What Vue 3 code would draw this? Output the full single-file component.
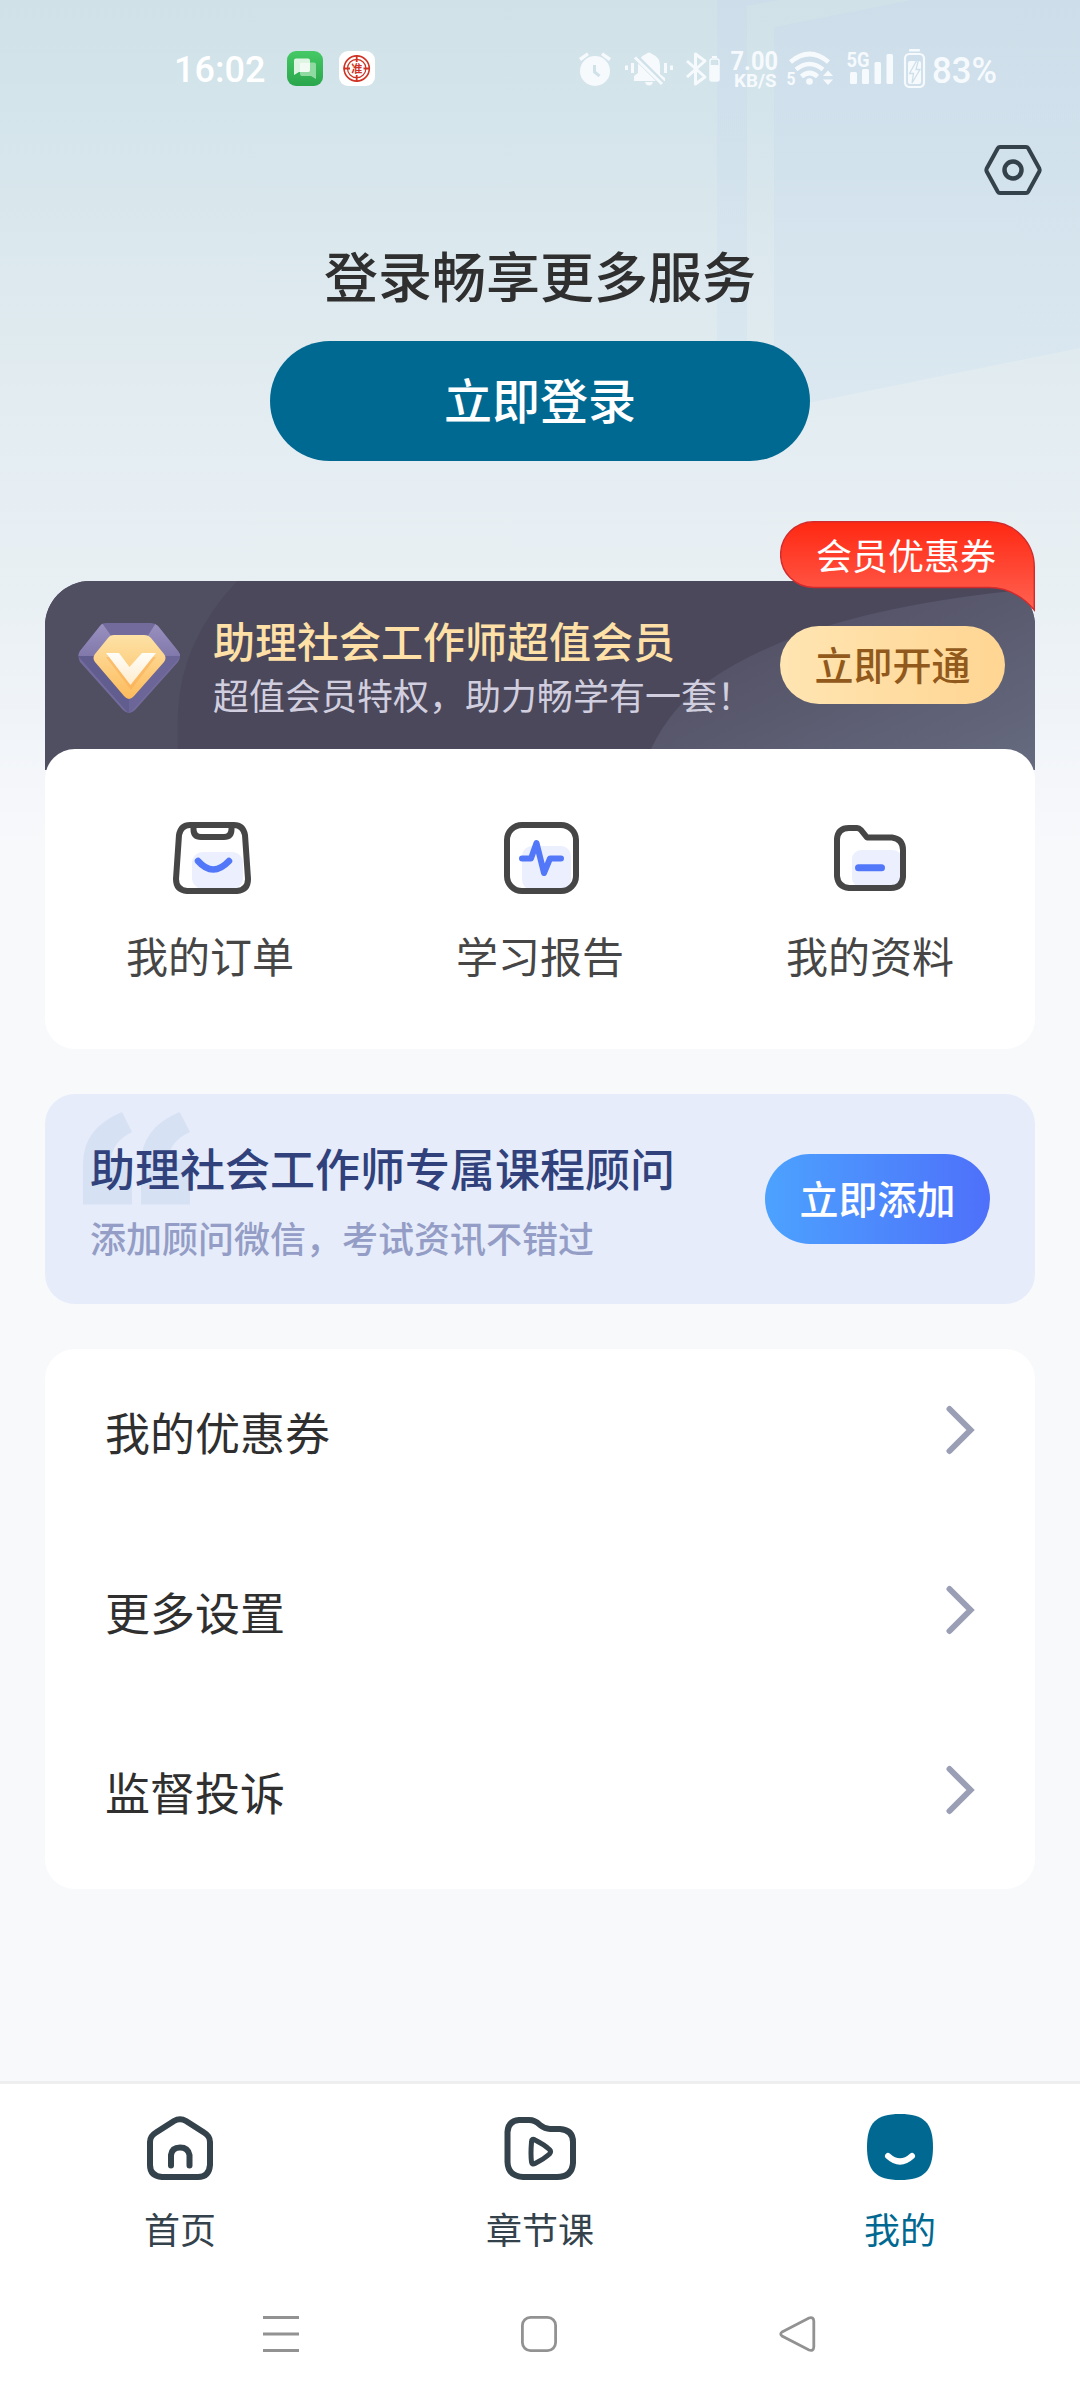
<script setup>
const settings = ['我的优惠券', '更多设置', '监督投诉']
</script>

<template>
  <div class="page">
    <svg class="backdrop" width="1080" height="440" viewBox="0 0 1080 440">
      <defs>
        <linearGradient id="glass" x1="0" y1="0" x2="0" y2="1">
          <stop offset="0" stop-color="#cbdbeb" stop-opacity=".6" />
          <stop offset="1" stop-color="#d3e4f0" stop-opacity=".45" />
        </linearGradient>
      </defs>
      <path d="M717 0H780L747 6V416L717 422Z" fill="url(#glass)" />
      <path d="M774 27L910 0H1080V348L774 410Z" fill="url(#glass)" />
    </svg>

    <header class="status">
      <span class="clock">16:02</span>
      <svg class="chat" width="36" height="35" viewBox="0 0 36 35">
        <defs>
          <linearGradient id="green" x1="0" y1="0" x2="0" y2="1">
            <stop offset="0" stop-color="#45c965" /><stop offset="1" stop-color="#2aa64c" />
          </linearGradient>
        </defs>
        <rect width="36" height="35" rx="9" fill="url(#green)" />
        <path d="M15 11.500H27Q29 11.500 29 13.500V28L24 25H15Q13 25 13 23V13.500Q13 11.500 15 11.500Z" fill="#8edaa0" />
        <path d="M9 7.500H21Q23 7.500 23 9.500V19Q23 21 21 21H12L7 24V9.500Q7 7.500 9 7.500Z" fill="#e9f8ec" fill-opacity=".94" />
        <path d="M13 12H23V19Q23 21 21 21H13Z" fill="#fff" fill-opacity=".5" />
      </svg>
      <svg class="seal" width="36" height="35" viewBox="0 0 36 35">
        <rect width="36" height="35" rx="9" fill="#fff" />
        <g fill="none" stroke="#cf3324">
          <circle cx="17.700" cy="17.500" r="12.600" stroke-width="1.600" />
          <circle cx="17.700" cy="17.500" r="9.200" stroke-width="1.200" />
          <path d="M17.700 4V11M17.700 24V31M4.500 17.500H11M24.500 17.500H31" stroke-width="1.800" />
        </g>
        <text x="17.700" y="21.600" text-anchor="middle" font-size="11" font-weight="700" fill="#cf3324">准</text>
      </svg>
      <svg class="signals" width="440" height="50" viewBox="570 42 440 50" fill="#f6fafd">
        <!-- alarm -->
        <path d="M579 58L587 52.500L589 55L581 61ZM611 58L603 52.500L601 55L609 61Z" />
        <circle cx="595" cy="71" r="15" />
        <path d="M594.500 65V72L599.500 76" fill="none" stroke="#d0e1ea" stroke-width="3" />
        <!-- muted bell -->
        <path d="M634 81V76L638 73V66Q638 57 646 54Q649 51 652 54Q660 57 660 66V74L665 78V81Z" />
        <path d="M645 82H653Q652 85.500 649 85.500T645 82Z" />
        <path d="M637 58L662 83" stroke="#d0e1ea" stroke-width="6" />
        <path d="M635 57.500L662 84" stroke="#f6fafd" stroke-width="3" />
        <path d="M626.500 65.500V70M632.500 63V73M665.500 63V73M671.500 65.500V70" stroke="#f6fafd" stroke-width="3" />
        <!-- bluetooth -->
        <path d="M687 61L705 77L695.500 84V54L705 61L687 77" fill="none" stroke="#f6fafd" stroke-width="3" stroke-linejoin="round" />
        <path d="M712 56H717V58H712Z" />
        <rect x="710" y="59" width="9" height="22" rx="2" fill="none" stroke="#f6fafd" stroke-width="1.500" />
        <rect x="710" y="65" width="9" height="16" rx="1" />
        <!-- network speed -->
        <text x="730.500" y="69.500" font-size="25" font-weight="700" textLength="47.500" lengthAdjust="spacingAndGlyphs">7.00</text>
        <text x="734" y="87" font-size="18" font-weight="700" textLength="42.500" lengthAdjust="spacingAndGlyphs">KB/S</text>
        <!-- wifi -->
        <g fill="none" stroke="#f6fafd" stroke-width="4.600">
          <path d="M790.500 62Q809.500 46 828.500 62" />
          <path d="M796 69.500Q809.500 58.500 823 69.500" />
          <path d="M801.500 76.500Q809.500 69.500 817.500 76.500" />
        </g>
        <circle cx="809.500" cy="81.500" r="3.300" />
        <text x="786.500" y="85" font-size="18" font-weight="700" textLength="9" lengthAdjust="spacingAndGlyphs">5</text>
        <path d="M823 76L828 70.500L833 76ZM823 79.500H833L828 85Z" />
        <!-- cellular -->
        <text x="846.500" y="66.500" font-size="20" font-weight="700" textLength="23" lengthAdjust="spacingAndGlyphs">5G</text>
        <rect x="850" y="72" width="7" height="12" rx="1.500" />
        <rect x="862" y="69" width="7" height="15" rx="1.500" />
        <rect x="874.500" y="62" width="6.500" height="22" rx="1.500" />
        <rect x="886.500" y="54" width="6.500" height="30" rx="1.500" />
        <!-- battery -->
        <rect x="909" y="49" width="11" height="2.600" rx="1" />
        <rect x="905" y="54" width="19" height="33" rx="4.500" fill="none" stroke="#f6fafd" stroke-width="2.200" />
        <rect x="908" y="61" width="13" height="23" rx="2" />
        <path d="M917 60L909.500 73.500H913.500L912 83L920 69.500H916L918.500 60Z" fill="#f6fafd" stroke="#cddfeb" stroke-width="1.300" />
        <text x="932" y="83" font-size="36" font-weight="500" textLength="65" lengthAdjust="spacingAndGlyphs">83%</text>
      </svg>
    </header>

    <div class="toolbar">
      <svg width="58" height="50" viewBox="0 0 58 50" fill="none" stroke="#34424c" stroke-width="4">
        <path d="M16 2H42Q43.500 2 44.200 3.200L55.300 23.500Q56 25 55.300 26.500L44.200 46.800Q43.500 48 42 48H16Q14.500 48 13.800 46.800L2.700 26.500Q2 25 2.700 23.500L13.800 3.200Q14.500 2 16 2Z" />
        <circle cx="29" cy="25" r="8.500" stroke-width="4.500" />
      </svg>
    </div>

    <section class="login">
      <h1>登录畅享更多服务</h1>
      <button>立即登录</button>
    </section>

    <section class="vip">
      <svg class="vip-art" width="990" height="189" viewBox="0 0 990 189">
        <defs>
          <linearGradient id="arc" x1="0" y1="0" x2="1" y2="1">
            <stop offset=".2" stop-color="#524f63" /><stop offset="1" stop-color="#666b80" />
          </linearGradient>
        </defs>
        <path d="M0 0H192Q136 60 133 130Q132 160 134 189H0Z" fill="#504f62" />
        <path d="M597 189L606 168Q626 126 662 101Q765 28 990 8V189Z" fill="url(#arc)" />
      </svg>
      <svg class="gem" width="103" height="91" viewBox="0 0 103 91">
        <defs>
          <linearGradient id="gold" x1="0" y1="0" x2="0" y2="1">
            <stop offset="0" stop-color="#fde2a6" /><stop offset="1" stop-color="#fdbb5c" />
          </linearGradient>
          <linearGradient id="lilac" x1="0" y1="0" x2="0" y2="1">
            <stop offset="0" stop-color="#9a91c0" /><stop offset="1" stop-color="#8179ab" />
          </linearGradient>
          <linearGradient id="vee" x1="0" y1="0" x2="0" y2="1">
            <stop offset="0" stop-color="#fffdf8" /><stop offset="1" stop-color="#feeccd" />
          </linearGradient>
          <clipPath id="gemShape">
            <path d="M28 0H73Q77 0 80 3L100 28Q104 33 100 39L57 87Q51 93 45 87L2 39Q-1 33 2 28L22 3Q24 0 28 0Z" />
          </clipPath>
        </defs>
        <g clip-path="url(#gemShape)">
          <rect width="103" height="91" fill="#736b9b" />
          <path d="M24 0L34 14L17 33H0V20Z" fill="url(#lilac)" />
          <path d="M78 0L69 14L86 33H103V20Z" fill="url(#lilac)" />
          <path d="M0 33H51V91Z" fill="#625d8f" />
          <path d="M103 33H51V91Z" fill="#6c6597" />
        </g>
        <path d="M36 12H66Q70.500 12 73 15L86 31Q89 35 86 39L56 73Q51 79 46 73L17 39Q14 35 17 31L30 15Q32 12 36 12Z" fill="url(#gold)" />
        <path d="M28 34H41L52 48L64 34H78L53 67Z" fill="#f9a950" opacity=".5" />
        <path d="M28 30H41L51.500 44L64 30H78L52.500 62Z" fill="url(#vee)" />
      </svg>
      <div class="vip-copy">
        <h2>助理社会工作师超值会员</h2>
        <p>超值会员特权，助力畅学有一套！</p>
      </div>
      <button class="open">立即开通</button>
      <div class="coupon">
        <svg width="255" height="91" viewBox="0 0 255 91">
          <defs>
            <linearGradient id="red" x1="0" y1="0" x2="0" y2="1">
              <stop offset="0" stop-color="#ff2812" /><stop offset="1" stop-color="#ff6252" />
            </linearGradient>
          </defs>
          <path d="M33.500 .7H209A45.300 45.300 0 0 1 254.300 46V89Q235 66.500 209 66.500H33.500A32.900 32.900 0 0 1 33.500 .7Z" fill="url(#red)" stroke="#d22b2d" stroke-width="1.400" />
        </svg>
        <span>会员优惠券</span>
      </div>
    </section>

    <section class="shortcuts">
      <div class="shortcut">
        <svg class="order-icon" width="84" height="78" viewBox="0 0 84 78" fill="none" stroke="#464646" stroke-width="6" stroke-linejoin="round">
          <rect x="22" y="33" width="51" height="37" rx="11" fill="#ecf0fe" stroke="none" />
          <path d="M20 6H64Q73 6 75 16L78 60Q78 71 67 72H17Q6 71 6 60L9 16Q11 6 20 6Z" />
          <path d="M23.500 7V10Q23.500 18 31 18H54Q61.500 18 61.500 10V7" />
          <path d="M28 42Q43 59 59 42" stroke="#5277f8" stroke-linecap="round" stroke-width="6.500" />
        </svg>
        <span>我的订单</span>
      </div>
      <div class="shortcut">
        <svg width="84" height="78" viewBox="0 0 84 78" fill="none" stroke="#464646" stroke-width="6" stroke-linejoin="round">
          <rect x="24" y="27" width="49" height="44" rx="10" fill="#ecf0fe" stroke="none" />
          <rect x="9" y="6" width="69" height="66" rx="15" />
          <path d="M24 39.500H33L38.500 24L46 54L52 39.500H63" stroke="#5277f8" stroke-linecap="round" />
        </svg>
        <span>学习报告</span>
      </div>
      <div class="shortcut">
        <svg width="84" height="78" viewBox="0 0 84 78" fill="none" stroke="#464646" stroke-width="6" stroke-linejoin="round">
          <rect x="24" y="31" width="50" height="37" rx="9" fill="#ecf0fe" stroke="none" />
          <path d="M21 9H29Q31 9 33 11L39 18.500H64Q75 20 75 31V58Q74 69 63 69H21Q10 68 9 57V20Q10 9 21 9Z" />
          <path d="M30.500 48.700H53.500" stroke="#5277f8" stroke-linecap="round" stroke-width="7" />
        </svg>
        <span>我的资料</span>
      </div>
    </section>

    <section class="advisor">
      <svg class="quote" width="107" height="93" viewBox="0 0 107 93" fill="#d6e1f3">
        <path d="M0 92.500V52Q0 16 39 0L49 20Q30 29 28 47H49V92.500Z" />
        <path d="M58 92.500V52Q58 16 96.500 0L107 20Q87 29 85 47H107V92.500Z" />
      </svg>
      <div class="advisor-copy">
        <h2>助理社会工作师专属课程顾问</h2>
        <p>添加顾问微信，考试资讯不错过</p>
      </div>
      <button class="add">立即添加</button>
    </section>

    <ul class="settings">
      <li v-for="item in settings" :key="item">
        <span>{{ item }}</span>
        <svg width="30" height="50" viewBox="0 0 30 50" fill="none" stroke="#9a9fb6" stroke-width="6" stroke-linecap="round">
          <path d="M4.500 4L25.500 25L4.500 46" />
        </svg>
      </li>
    </ul>

    <nav class="tabs">
      <div class="tab">
        <svg width="72" height="72" viewBox="0 0 72 72" fill="none" stroke="#34424c" stroke-width="6" stroke-linejoin="round">
          <path d="M30 9Q36 5.500 42 9L60 20.500Q66 24 66 30V53Q65 65 54 65H18Q6 64 6 53V30Q6 24 12 20.500Z" />
          <path d="M27 53.500V43Q28 35.500 36 35.500T45.500 43V53.500" stroke-linecap="round" />
        </svg>
        <span>首页</span>
      </div>
      <div class="tab">
        <svg width="72" height="72" viewBox="0 0 72 72" fill="none" stroke="#34424c" stroke-width="6" stroke-linejoin="round">
          <path d="M15 8H25Q31 8 36 13Q41 17 46 17H56Q69 18 69 30V51Q68 65 53 65H19Q4 64 3.500 50V20Q4 9 15 8Z" />
          <path d="M31 28Q27.500 26 27.500 30Q26.500 42 27.500 50Q28 53 31 51.500Q40 47 45.500 42Q47.500 39.500 45.500 37.500Q40 32.500 31 28Z" stroke-width="5" />
        </svg>
        <span>章节课</span>
      </div>
      <div class="tab active">
        <svg width="72" height="72" viewBox="0 0 72 72" fill="none">
          <path d="M36 2C60 2 69 11 69 35S60 68 36 68S3 59 3 35S12 2 36 2Z" fill="#016991" />
          <path d="M24 44Q36 55 48 44" stroke="#fff" stroke-width="6" stroke-linecap="round" />
        </svg>
        <span>我的</span>
      </div>
    </nav>

    <footer class="sysnav">
      <svg width="40" height="40" viewBox="0 0 40 40" stroke="#929292" stroke-width="3">
        <path d="M2 3.500H38M2 20H38M2 36.500H38" />
      </svg>
      <svg width="40" height="40" viewBox="0 0 40 40" fill="none" stroke="#929292" stroke-width="2.800">
        <rect x="3.400" y="3.400" width="33.200" height="33.200" rx="8" />
      </svg>
      <svg width="40" height="40" viewBox="0 0 40 40" fill="none" stroke="#929292" stroke-width="2.800">
        <path d="M5 18L32 4Q36.500 2.500 36.800 7V33Q36.500 37.500 32 36L5 22Q2.500 20 5 18Z" />
      </svg>
    </footer>
  </div>
</template>

<style>
body {
  margin: 0;
}
</style>

<style scoped>
.page {
  position: relative;
  display: flex;
  flex-direction: column;
  width: 1080px;
  height: 2400px;
  overflow: hidden;
  background: linear-gradient(180deg, #d0e2e8 0, #d3e4eb 100px, #dbe8ed 240px, #e4edf2 440px, #e9f0f4 600px, #f4f6fa 780px, #f8f9fb 850px);
  font-family: "Noto Sans CJK SC", "Noto Sans", sans-serif;
}
.backdrop {
  position: absolute;
  top: 0;
  left: 0;
}
h1,
h2,
p,
ul {
  margin: 0;
  padding: 0;
  font-weight: 400;
}
button {
  padding: 0;
  border: 0;
  font-family: inherit;
}
.status {
  position: relative;
  display: flex;
  align-items: center;
  height: 137px;
  box-sizing: border-box;
  padding: 0 70px 0 174px;
  font-family: Roboto, "Noto Sans CJK SC", sans-serif;
}
.clock {
  width: 113px;
  padding-top: 2px;
  box-sizing: border-box;
  color: #fff;
  font-size: 36px;
  font-weight: 500;
  line-height: 42px;
}
.seal {
  margin-left: 16px;
}
.signals {
  margin-left: auto;
  margin-top: -3px;
}
.toolbar {
  position: relative;
  display: flex;
  justify-content: flex-end;
  height: 95px;
  padding: 8px 38px 0 0;
  box-sizing: border-box;
}
.login {
  position: relative;
  display: flex;
  flex-direction: column;
  align-items: center;
  height: 349px;
}
.login h1 {
  height: 109px;
  color: #2f2f2f;
  font-size: 54px;
  font-weight: 500;
  line-height: 86px;
}
.login button {
  width: 540px;
  height: 120px;
  padding-bottom: 5px;
  border-radius: 60px;
  background: #006991;
  color: #fff;
  font-size: 48px;
  font-weight: 500;
  line-height: 115px;
}
.vip {
  position: relative;
  display: flex;
  flex: none;
  align-items: flex-start;
  height: 189px;
  margin: 0 45px;
  border-radius: 45px 45px 0 0;
  background: #4b485c;
}
.vip-art {
  position: absolute;
  inset: 0;
  border-radius: 45px 45px 0 0;
}
.gem {
  position: relative;
  margin: 42px 0 0 33px;
}
.vip-copy {
  position: relative;
  flex: 1;
  padding: 30px 0 0 32px;
  white-space: nowrap;
}
.vip-copy h2 {
  color: #ffe0a6;
  font-size: 42px;
  font-weight: 500;
  line-height: 58px;
}
.vip-copy p {
  color: #d1cfdf;
  font-size: 36px;
  line-height: 50px;
}
.open {
  position: relative;
  width: 225px;
  height: 78px;
  margin: 45px 30px 0 0;
  padding-bottom: 3px;
  border-radius: 39px;
  background: linear-gradient(90deg, #ffe5b2, #ffd592);
  color: #91591b;
  font-size: 39px;
  font-weight: 500;
  line-height: 75px;
}
.coupon {
  position: absolute;
  top: -60px;
  right: 0;
  width: 255px;
  height: 91px;
}
.coupon svg {
  position: absolute;
  inset: 0;
}
.coupon span {
  position: relative;
  display: block;
  padding-right: 3px;
  color: #fff;
  font-size: 36px;
  line-height: 67px;
  text-align: center;
}
.shortcuts {
  position: relative;
  display: flex;
  flex: none;
  height: 300px;
  margin: -21px 45px 0;
  border-radius: 30px;
  background: #fff;
}
.shortcut {
  display: flex;
  flex: 1;
  flex-direction: column;
  align-items: center;
  padding-top: 70px;
  color: #464646;
  font-size: 42px;
  line-height: 60px;
}
.order-icon {
  margin-left: 3px;
}
.shortcut span {
  margin-top: 28px;
}
.advisor {
  position: relative;
  display: flex;
  flex: none;
  align-items: center;
  justify-content: space-between;
  height: 210px;
  margin: 45px 45px 0;
  padding: 0 45px;
  box-sizing: border-box;
  border-radius: 30px;
  background: #e6ecfa;
}
.quote {
  position: absolute;
  top: 18px;
  left: 38px;
}
.advisor-copy {
  position: relative;
  padding-top: 4px;
  white-space: nowrap;
}
.advisor h2 {
  color: #30417b;
  font-size: 45px;
  font-weight: 500;
  line-height: 72px;
}
.advisor p {
  color: #949dc5;
  font-size: 36px;
  font-weight: 500;
  line-height: 67px;
}
.add {
  width: 225px;
  height: 90px;
  padding-bottom: 4px;
  border-radius: 45px;
  background: linear-gradient(90deg, #4ca2ff, #4e70fa);
  color: #fff;
  font-size: 39px;
  font-weight: 500;
  line-height: 86px;
}
.settings {
  height: 540px;
  margin: 45px 45px 0;
  border-radius: 30px;
  background: #fff;
  list-style: none;
}
.settings li {
  display: flex;
  align-items: center;
  justify-content: space-between;
  height: 180px;
  box-sizing: border-box;
  padding: 0 60px 18px;
  color: #2f2f2f;
  font-size: 45px;
  line-height: 66px;
}
.settings span {
  padding-top: 3px;
}
.tabs {
  display: flex;
  height: 190px;
  margin-top: auto;
  border-top: 3px solid #eee;
  background: #fff;
}
.tab {
  display: flex;
  flex: 1;
  flex-direction: column;
  align-items: center;
  padding-top: 28px;
  color: #34424c;
  font-size: 36px;
  line-height: 52px;
}
.tab span {
  margin-top: 18px;
}
.tab.active {
  color: #016991;
}
.sysnav {
  display: flex;
  justify-content: space-between;
  height: 126px;
  box-sizing: border-box;
  padding: 40px 263px 0 261px;
  background: #fff;
}
</style>
